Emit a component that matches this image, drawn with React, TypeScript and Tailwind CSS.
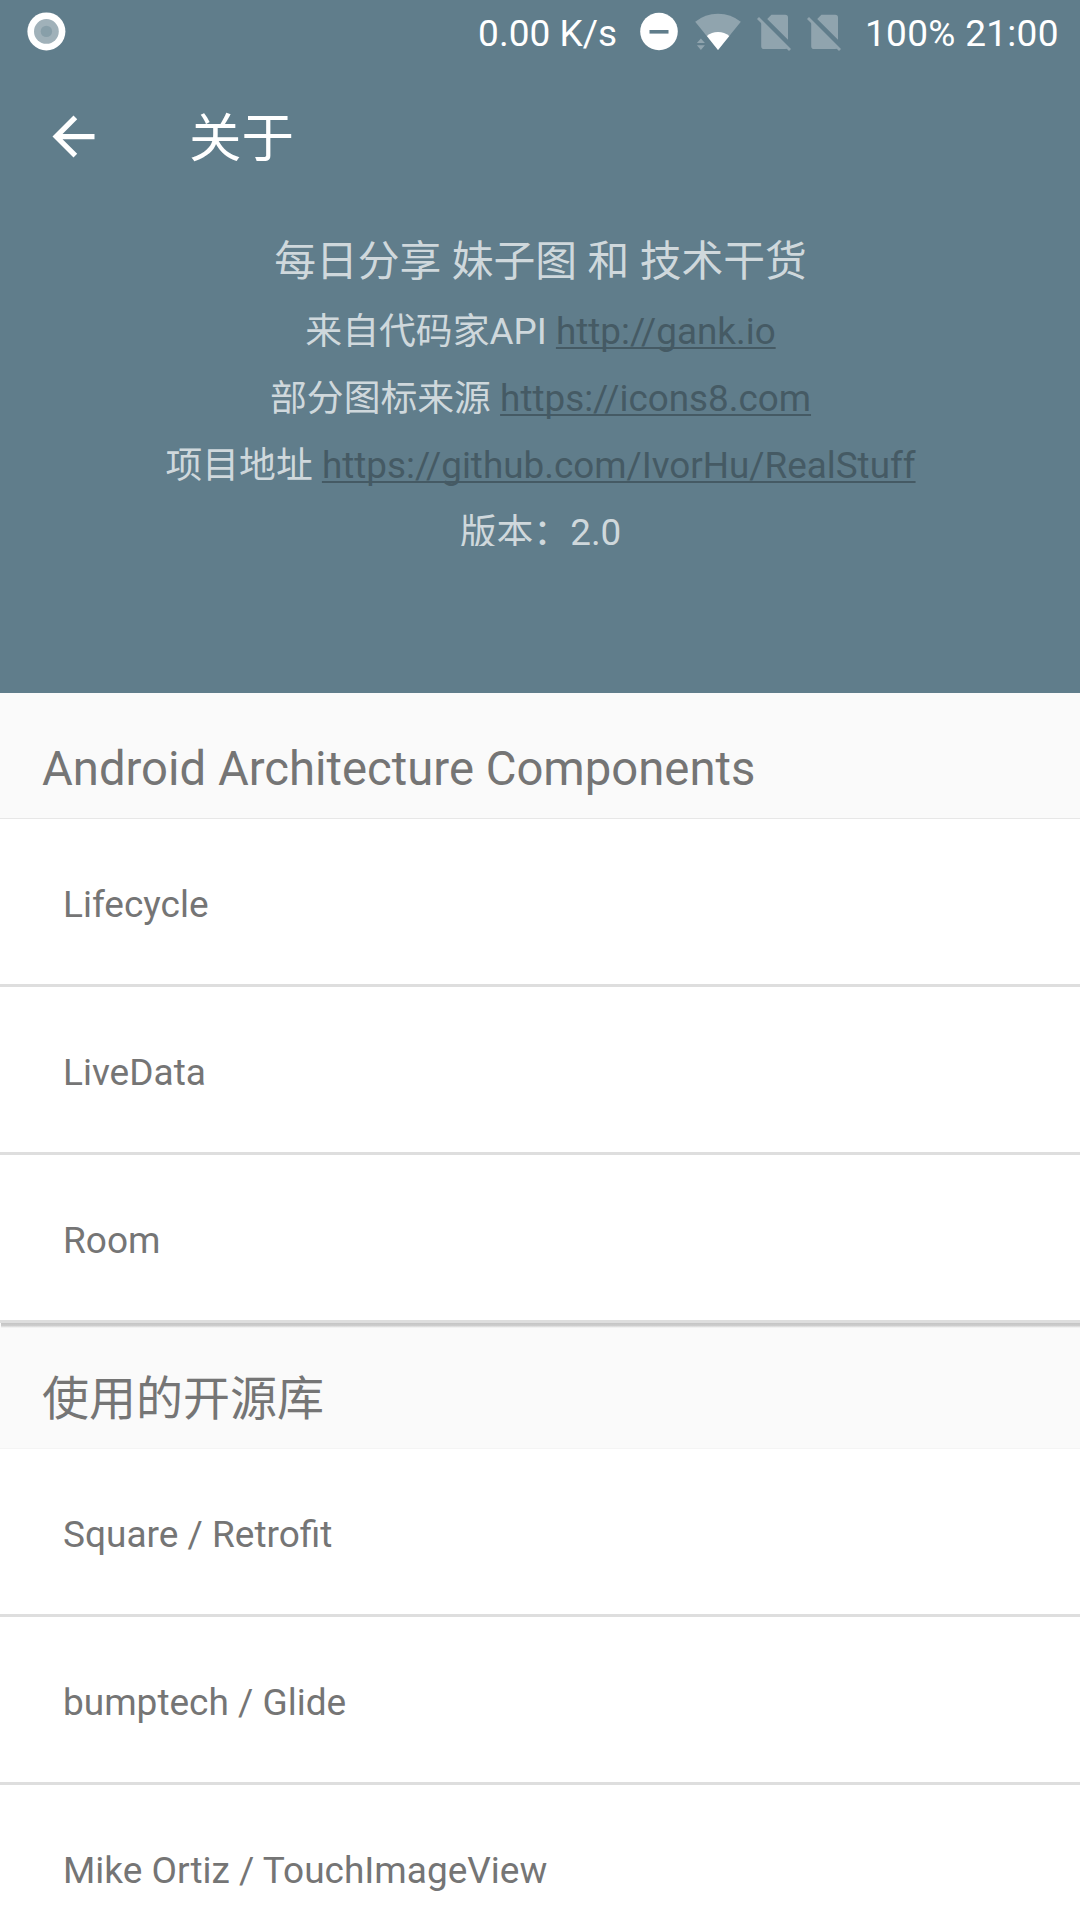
import React from "react";

const sections = [
  {
    title: "Android Architecture Components",
    items: ["Lifecycle", "LiveData", "Room"],
    line: "border-[#e7e7e7]",
    size: "text-[47.25px]",
  },
  {
    title: "使用的开源库",
    items: ["Square / Retrofit", "bumptech / Glide", "Mike Ortiz / TouchImageView"],
    line: "border-[#f4f4f4]",
    size: "text-[47px]",
  },
];

function RecordIcon() {
  return (
    <svg className="h-[63px] w-[40px]" viewBox="0 0 40 63">
      <circle cx="20.4" cy="31.4" r="19" fill="#fff" />
      <circle cx="20.4" cy="31.4" r="12.4" fill="#a0b1b9" />
      <circle cx="20.4" cy="31.4" r="5.7" fill="#889fa9" />
    </svg>
  );
}

function DoNotDisturbIcon() {
  return (
    <svg className="ml-[22px] h-[63px] w-[40px] shrink-0" viewBox="638.5 0 40 63">
      <circle cx="658.5" cy="31.5" r="18.8" fill="#fff" />
      <rect x="649" y="30" width="19" height="3.6" fill="#607d8b" />
    </svg>
  );
}

function WifiIcon() {
  return (
    <svg className="ml-[16px] h-[63px] w-[46px] shrink-0" viewBox="694.5 0 46 63">
      <path d="M717.5 50 694.7 21.8Q704.5 13.7 717.5 13.7T740.3 21.8Z" fill="#90a4ae" />
      <path d="M717.5 50 706.4 36Q711 32 717.5 32T728.8 36Z" fill="#fff" />
      <path d="M700.4 38.4 704.4 43H696.4ZM696.4 45.3H704.4L700.4 50Z" fill="#90a4ae" />
    </svg>
  );
}

function NoSimIcon({ className }: { className: string }) {
  return (
    <svg className={className} viewBox="756 0 36 63">
      <path d="M767.2 19 771.4 14.8H785.2Q788 14.8 788 17.6V39.8ZM761.2 21.2 788 48Q787 49 785.2 49H764Q761.2 49 761.2 46.2Z" fill="#90a4ae" />
      <path d="M758 18 790 50" stroke="#90a4ae" strokeWidth="2.8" />
    </svg>
  );
}

function StatusBar() {
  return (
    <div className="flex h-[63px] items-start pl-[26px] text-[37px] leading-[67px] text-white">
      <RecordIcon />
      <span className="ml-auto whitespace-pre">0.00 K/s</span>
      <DoNotDisturbIcon />
      <WifiIcon />
      <NoSimIcon className="ml-[15px] h-[63px] w-[36px] shrink-0" />
      <NoSimIcon className="ml-[14px] h-[63px] w-[36px] shrink-0" />
      <span className="ml-[23px] w-[215px] shrink-0 tracking-[0.3px] whitespace-pre">100% 21:00</span>
    </div>
  );
}

function Link({ children }: { children: string }) {
  return (
    <a className="text-[#455a64] underline decoration-2 underline-offset-[3px] [text-decoration-skip-ink:none]">
      {children}
    </a>
  );
}

export default function App() {
  return (
    <div
      lang="zh-CN"
      className="h-[1920px] w-[1080px] overflow-hidden bg-white font-['Roboto','Noto_Sans_CJK_SC',sans-serif]"
    >
      <header className="h-[693px] bg-[#607d8b]">
        <StatusBar />
        <div className="flex h-[147px] items-center pl-[42px]">
          <svg className="size-[63px]" viewBox="0 0 24 24" fill="#fff">
            <path d="M20 11H7.83l5.59-5.59L12 4l-8 8 8 8 1.41-1.41L7.83 13H20v-2z" />
          </svg>
          <h1 className="ml-[84px] pt-[5px] text-[52.5px] leading-[70px] text-white">关于</h1>
        </div>
        <div className="pt-[18px] pl-px text-center text-[36.85px] leading-[67px] text-[#cfd8dc]">
          <p className="h-[70px] text-[41.8px] leading-[68px]">每日分享 妹子图 和 技术干货</p>
          <p>来自代码家API <Link>http://gank.io</Link></p>
          <p>部分图标来源 <Link>https://icons8.com</Link></p>
          <p>项目地址 <Link>https://github.com/IvorHu/RealStuff</Link></p>
          <p className="h-[47px] overflow-hidden">版本：2.0</p>
        </div>
      </header>
      {sections.map((s, i) => (
        <section key={s.title} className="text-[#757575]">
          <div className={`relative h-[126px] border-b bg-[#fafafa] pt-[27px] pl-[42px] ${s.line}`}>
            {i > 0 && (
              <div className="absolute top-0 right-0 left-px h-[5px] bg-linear-to-b from-[#c4c4c4] via-[#cdcdcd] to-[#fafafa]" />
            )}
            <h2 className={`leading-[98px] ${s.size}`}>{s.title}</h2>
          </div>
          <ul>
            {s.items.map((t) => (
              <li
                key={t}
                className="h-[168px] border-b-[3px] border-[#dedede] bg-white pt-[6px] pl-[63px] text-[37px] leading-[159px]"
              >
                {t}
              </li>
            ))}
          </ul>
        </section>
      ))}
    </div>
  );
}
